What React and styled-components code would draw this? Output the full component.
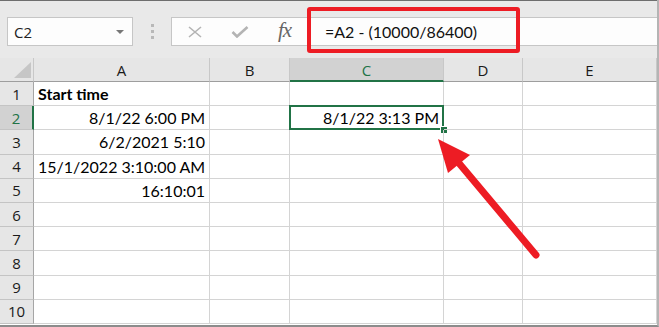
import React from 'react';
import styled, { createGlobalStyle } from 'styled-components';

const GlobalStyle = createGlobalStyle`
  html, body {
    margin: 0;
    padding: 0;
    background: #fff;
  }
  body {
    font-family: Lato, "Liberation Sans", sans-serif;
  }
`;

const GREEN = '#217346';
const RED = '#ed1c24';

const Frame = styled.div`
  position: relative;
  width: 659px;
  height: 327px;
  overflow: hidden;
  background: #fff;
  border-right: 2px solid #b4b4b4;
  border-bottom: 2px solid #8c8c8c;
  box-sizing: border-box;
`;

const Toolbar = styled.div`
  height: 58px;
  display: flex;
  align-items: flex-start;
  padding: 16px 0 0 7px;
  box-sizing: border-box;
  background: #e9e9e9;
  border-top: 1px solid #6e6e6e;
`;

const NameBox = styled.div`
  width: 126px;
  height: 29px;
  box-sizing: border-box;
  display: flex;
  align-items: center;
  justify-content: space-between;
  padding: 0 8px 0 6px;
  background: #fdfdfd;
  border: 1px solid #c6c6c6;
  font-family: "Open Sans", "Noto Sans", sans-serif;
  font-size: 15px;
  color: #222;
`;

const Caret = styled.span`
  width: 0;
  height: 0;
  border-left: 4px solid transparent;
  border-right: 4px solid transparent;
  border-top: 4px solid #777;
`;

const Grip = styled.div`
  width: 38px;
  height: 29px;
  display: flex;
  flex-direction: column;
  align-items: center;
  justify-content: center;
  gap: 3px;

  span {
    width: 3px;
    height: 3px;
    background: #b8b8b8;
  }
`;

const FormulaBar = styled.div`
  flex: 1;
  height: 29px;
  box-sizing: border-box;
  display: flex;
  align-items: center;
  background: #fdfdfd;
  border: 1px solid #c6c6c6;
  border-right: none;
`;

const IconButton = styled.div`
  width: 45px;
  height: 100%;
  display: flex;
  align-items: center;
  justify-content: center;
  color: #b4b4b4;
  flex-shrink: 0;
`;

const Fx = styled.span`
  font-family: "Liberation Serif", serif;
  font-style: italic;
  font-size: 21px;
  color: #666;
  letter-spacing: -1px;
  margin-top: -3px;
`;

const FormulaText = styled.div`
  padding-left: 18px;
  font-size: 16px;
  color: #111;
`;

const Sheet = styled.div`
  display: grid;
  grid-template-columns: 34px 176px 80px 154px 79px 134px;
  grid-template-rows: 24px repeat(10, 24.2px);
`;

const Corner = styled.div`
  position: relative;
  background: #e6e6e6;
  border-right: 1px solid #c8c8c8;
  border-bottom: 1px solid #9e9e9e;
  box-sizing: border-box;

  &::after {
    content: '';
    position: absolute;
    right: 2px;
    bottom: 3px;
    width: 17px;
    height: 16px;
    background: #c6c6c6;
    clip-path: polygon(100% 0, 100% 100%, 0 100%);
  }
`;

const ColHead = styled.div`
  display: flex;
  align-items: center;
  justify-content: center;
  box-sizing: border-box;
  font-family: "Open Sans", "Noto Sans", sans-serif;
  font-size: 15px;
  background: ${p => (p.$active ? '#d2d2d2' : '#e6e6e6')};
  color: ${p => (p.$active ? GREEN : '#1a1a1a')};
  border-right: 1px solid #c8c8c8;
  border-bottom: ${p => (p.$active ? `2px solid ${GREEN}` : '1px solid #9e9e9e')};
  padding-top: ${p => (p.$active ? '1px' : '0')};
`;

const RowHead = styled.div`
  display: flex;
  align-items: center;
  justify-content: center;
  box-sizing: border-box;
  font-family: "Open Sans", "Noto Sans", sans-serif;
  font-size: 15px;
  background: ${p => (p.$active ? '#d2d2d2' : '#e6e6e6')};
  color: ${p => (p.$active ? GREEN : '#1a1a1a')};
  border-bottom: 1px solid #c4c4c4;
  border-right: ${p => (p.$active ? `2px solid ${GREEN}` : '1px solid #a6a6a6')};
`;

const Cell = styled.div`
  position: relative;
  display: flex;
  align-items: center;
  justify-content: ${p => (p.$right ? 'flex-end' : 'flex-start')};
  padding: 0 4px;
  box-sizing: border-box;
  white-space: nowrap;
  font-size: 16px;
  font-weight: ${p => (p.$bold ? 700 : 400)};
  color: #000;
  border-right: 1px solid #d4d4d4;
  border-bottom: 1px solid #d4d4d4;

  ${p =>
    p.$selected &&
    `
    &::before {
      content: '';
      position: absolute;
      left: -1px;
      top: -1px;
      right: -1px;
      bottom: -1px;
      border: 2px solid ${GREEN};
    }
    &::after {
      content: '';
      position: absolute;
      right: -4px;
      bottom: -4px;
      width: 6px;
      height: 6px;
      background: ${GREEN};
      outline: 1px solid #fff;
    }
  `}
`;

const Callout = styled.div`
  position: absolute;
  left: 307px;
  top: 7px;
  width: 213px;
  height: 46px;
  box-sizing: border-box;
  border: 4px solid ${RED};
  border-radius: 3px;
  pointer-events: none;
`;

const ArrowLayer = styled.svg`
  position: absolute;
  left: 0;
  top: 0;
  pointer-events: none;
`;

const columns = ['A', 'B', 'C', 'D', 'E'];

const rows = [
  { A: { text: 'Start time', bold: true } },
  { A: { text: '8/1/22 6:00 PM', right: true }, C: { text: '8/1/22 3:13 PM', right: true, selected: true } },
  { A: { text: '6/2/2021 5:10', right: true } },
  { A: { text: '15/1/2022 3:10:00 AM' } },
  { A: { text: '16:10:01', right: true } },
  {},
  {},
  {},
  {},
  {}
];

const CrossIcon = () => (
  <svg width="16" height="12" viewBox="0 0 16 12">
    <path d="M2 1 L14 11 M14 1 L2 11" stroke="currentColor" strokeWidth="1.6" fill="none" />
  </svg>
);

const CheckIcon = () => (
  <svg width="18" height="12" viewBox="0 0 18 12">
    <path d="M1.5 6 L6 10.5 L16.5 1" stroke="currentColor" strokeWidth="2.6" fill="none" />
  </svg>
);

const App = () => (
  <Frame>
    <GlobalStyle />
    <Toolbar>
      <NameBox>
        C2
        <Caret />
      </NameBox>
      <Grip>
        <span />
        <span />
        <span />
      </Grip>
      <FormulaBar>
        <IconButton>
          <CrossIcon />
        </IconButton>
        <IconButton>
          <CheckIcon />
        </IconButton>
        <IconButton>
          <Fx>fx</Fx>
        </IconButton>
        <FormulaText>=A2 - (10000/86400)</FormulaText>
      </FormulaBar>
    </Toolbar>

    <Sheet>
      <Corner />
      {columns.map(c => (
        <ColHead key={c} $active={c === 'C'}>
          {c}
        </ColHead>
      ))}
      {rows.map((row, i) => (
        <React.Fragment key={i}>
          <RowHead $active={i === 1}>{i + 1}</RowHead>
          {columns.map(c => {
            const cell = row[c];
            return (
              <Cell
                key={c}
                $right={cell && cell.right}
                $bold={cell && cell.bold}
                $selected={cell && cell.selected}
              >
                {cell ? cell.text : null}
              </Cell>
            );
          })}
        </React.Fragment>
      ))}
    </Sheet>

    <Callout />
    <ArrowLayer width="659" height="327">
      <line x1="458" y1="162" x2="536" y2="255" stroke={RED} strokeWidth="7" strokeLinecap="round" />
      <polygon points="438,139 448,173 470,155" fill={RED} />
    </ArrowLayer>
  </Frame>
);

export default App;
